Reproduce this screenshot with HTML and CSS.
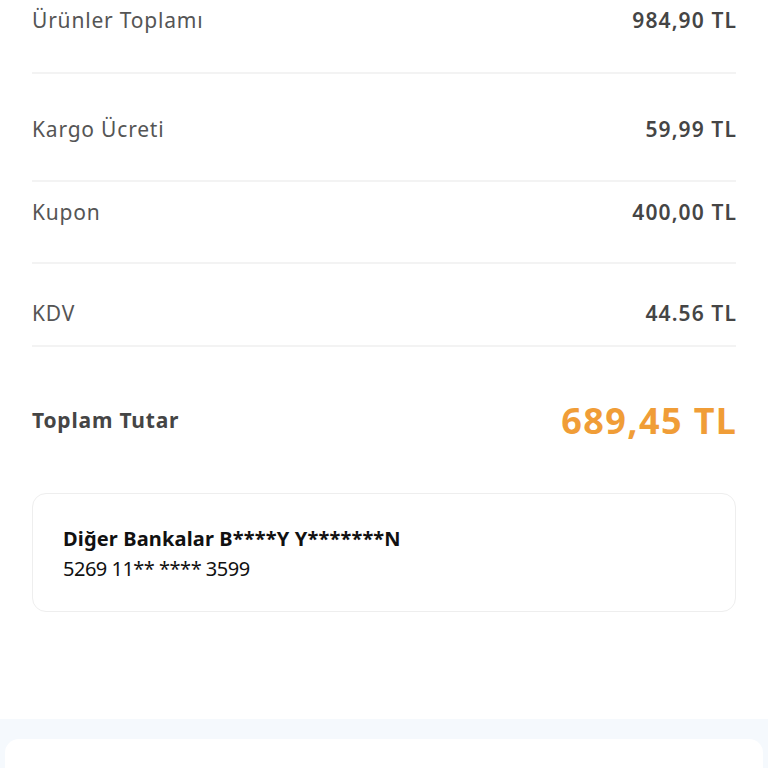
FILE: index.html
```html
<!DOCTYPE html>
<html lang="tr">
<head>
<meta charset="utf-8">
<link rel="stylesheet" href="styles.css">
</head>
<body>
<div class="page">
  <div class="summary">
    <div class="row row-1"><span class="label">Ürünler Toplamı</span><span class="value">984,90 TL</span></div>
    <div class="row row-2"><span class="label">Kargo Ücreti</span><span class="value">59,99 TL</span></div>
    <div class="row row-3"><span class="label">Kupon</span><span class="value">400,00 TL</span></div>
    <div class="row row-4"><span class="label">KDV</span><span class="value">44.56 TL</span></div>
    <div class="total"><span class="total-label">Toplam Tutar</span><span class="total-value">689,45 TL</span></div>
    <div class="card">
      <div class="card-title">Diğer Bankalar B****Y Y*******N</div>
      <div class="card-number">5269 11** **** 3599</div>
    </div>
  </div>
  <div class="footer">
    <div class="footer-panel"></div>
  </div>
</div>
</body>
</html>
```
FILE: styles.css
```css
html, body {
  margin: 0;
  padding: 0;
  background: #ffffff;
}
body {
  font-family: "Noto Sans", "Lato", sans-serif;
  width: 768px;
  height: 768px;
  overflow: hidden;
}
.page {
  display: flex;
  flex-direction: column;
  height: 768px;
}
.summary {
  padding: 0 32px;
  display: flex;
  flex-direction: column;
}
.row {
  display: flex;
  justify-content: space-between;
  align-items: center;
  border-bottom: 2px solid #f3f3f3;
  box-sizing: border-box;
  line-height: 28px;
}
.row-1 { height: 74px; padding-bottom: 32px; }
.row-2 { height: 108px; padding-top: 4px; }
.row-3 { height: 82px; padding-bottom: 20px; }
.row-4 { height: 83px; padding-top: 17px; }
.label {
  font-size: 21px;
  color: #555555;
  letter-spacing: 0.8px;
}
.value {
  font-size: 21px;
  font-weight: 600;
  color: #454545;
  letter-spacing: 1.1px;
  margin-right: -1px;
}
.total {
  display: flex;
  justify-content: space-between;
  align-items: center;
  height: 146px;
}
.total-label {
  font-size: 21px;
  font-weight: 700;
  color: #454545;
  letter-spacing: 0.8px;
}
.total-value {
  font-size: 36px;
  font-weight: 700;
  color: #f09d37;
  letter-spacing: 1.4px;
  margin-right: -1.4px;
}
.card {
  border: 1.5px solid #eeeeee;
  border-radius: 14px;
  height: 119px;
  box-sizing: border-box;
  padding: 30px 30px 0;
  display: flex;
  flex-direction: column;
}
.card-title {
  font-size: 20px;
  font-weight: 700;
  color: #111111;
  line-height: 30px;
  letter-spacing: 0.15px;
}
.card-number {
  font-size: 20px;
  color: #111111;
  line-height: 30px;
  letter-spacing: -0.5px;
}
.footer {
  margin-top: 107px;
  flex: 1;
  background: #f5f9fd;
  padding: 20px 5px 0;
  display: flex;
}
.footer-panel {
  flex: 1;
  background: #ffffff;
  border-radius: 14px 14px 0 0;
}
```
